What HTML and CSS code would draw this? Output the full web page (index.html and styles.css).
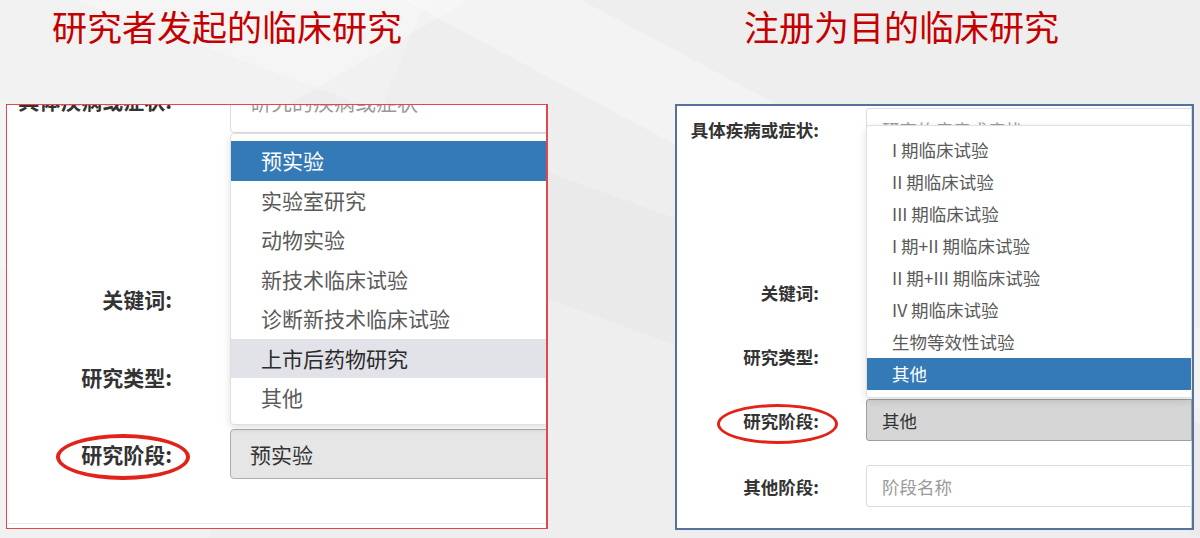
FILE: index.html
```html
<!DOCTYPE html>
<html lang="zh-CN">
<head>
    <meta charset="UTF-8">
    <title>研究阶段对比</title>
    <link rel="stylesheet" href="styles.css">
</head>
<body>
    <div class="slide">
        <section class="case">
            <h1 class="case-title title-iit">研究者发起的临床研究</h1>
            <div class="panel panel-iit">
                <div class="sheet">
                    <div class="form-group disease">
                        <label>具体疾病或症状:</label>
                        <div class="field area placeholder">研究的疾病或症状</div>
                    </div>
                    <div class="form-group keyword">
                        <label>关键词:</label>
                        <div class="field"></div>
                    </div>
                    <div class="form-group type">
                        <label>研究类型:</label>
                        <div class="field"></div>
                    </div>
                    <div class="form-group stage">
                        <label>研究阶段:</label>
                        <div class="field select">预实验</div>
                    </div>
                </div>

                <ul class="menu">
                    <li class="active">预实验</li>
                    <li>实验室研究</li>
                    <li>动物实验</li>
                    <li>新技术临床试验</li>
                    <li>诊断新技术临床试验</li>
                    <li class="hover">上市后药物研究</li>
                    <li>其他</li>
                </ul>
                <span class="mark"></span>
            </div>
        </section>

        <section class="case">
            <h1 class="case-title title-reg">注册为目的临床研究</h1>
            <div class="panel panel-reg">
                <div class="sheet">
                    <div class="form-group disease">
                        <label>具体疾病或症状:</label>
                        <div class="field placeholder">研究的疾病或症状</div>
                    </div>
                    <div class="form-group keyword">
                        <label>关键词:</label>
                        <div class="field"></div>
                    </div>
                    <div class="form-group type">
                        <label>研究类型:</label>
                        <div class="field"></div>
                    </div>
                    <div class="form-group stage">
                        <label>研究阶段:</label>
                        <div class="field select">其他</div>
                    </div>
                    <div class="form-group other">
                        <label>其他阶段:</label>
                        <div class="field placeholder">阶段名称</div>
                    </div>
                </div>

                <ul class="menu">
                    <li>I 期临床试验</li>
                    <li>II 期临床试验</li>
                    <li>III 期临床试验</li>
                    <li>I 期+II 期临床试验</li>
                    <li>II 期+III 期临床试验</li>
                    <li>IV 期临床试验</li>
                    <li>生物等效性试验</li>
                    <li class="active">其他</li>
                </ul>
                <span class="mark"></span>
            </div>
        </section>
    </div>
</body>
</html>
```

FILE: styles.css
```css
body {
    margin: 0;
    width: 1200px;
    height: 538px;
    overflow: hidden;
    font-family: "Noto Sans CJK SC", "Noto Sans", sans-serif;
    color: #333;
    background-color: #eeeeee;
    background-image:
        linear-gradient(150deg, rgba(255, 255, 255, 0.25) 0 22%, transparent 22%),
        linear-gradient(28deg, transparent 64%, rgba(255, 255, 255, 0.3) 64% 72%, transparent 72%),
        linear-gradient(200deg, transparent 42%, rgba(0, 0, 0, 0.015) 42% 55%, transparent 55%),
        linear-gradient(112deg, rgba(255, 255, 255, 0.2) 0 30%, transparent 30%);
}

.slide {
    display: grid;
    grid-template-columns: 542px 519px;
    column-gap: 127px;
    padding-left: 6px;
}

.case {
    display: flex;
    flex-direction: column;
}

.case-title {
    margin: 0;
    height: 104px;
    font-size: 35px;
    line-height: 52px;
    font-weight: normal;
    color: #c40000;
    white-space: nowrap;
}

.title-iit {
    padding-left: 46px;
}

.title-reg {
    padding-left: 69px;
}

/* screenshot frames */
.panel {
    position: relative;
    box-sizing: border-box;
    background-color: #fff;
    overflow: hidden;
}

.panel-iit {
    width: 542px;
    height: 425px;
    border: 1px solid #e2474c;
    border-right-width: 2px;
}

.panel-reg {
    width: 519px;
    height: 426px;
    border: 2px solid #56729b;
    box-shadow: inset -1px 0 0 #cfd5de;
}

.sheet {
    display: flow-root;
}

.form-group {
    display: flex;
    align-items: center;
}

.form-group label {
    flex: none;
    text-align: right;
    font-weight: bold;
    color: #333;
    white-space: nowrap;
}

.field {
    box-sizing: border-box;
    height: 100%;
    border: 1px solid #dcdcdc;
    background-color: #fff;
    white-space: nowrap;
    display: flex;
    align-items: center;
}

.placeholder {
    color: #9a9a9a;
}

.menu {
    position: absolute;
    margin: 0;
    list-style: none;
    background-color: #fff;
    border: 1px solid #e0e0e0;
    border-radius: 4px;
    box-shadow: 0 3px 8px rgba(0, 0, 0, 0.12);
    color: #5a5a5a;
}

.menu li {
    white-space: nowrap;
}

.menu li.active {
    background-color: #337ab7;
    color: #fff;
}

.menu li.hover {
    background-color: #e2e3e8;
    color: #2b2b2b;
}

.mark {
    position: absolute;
    box-sizing: border-box;
    border: 4px solid #e2231a;
    border-radius: 50%;
}

/* left: investigator initiated */
.panel-iit .sheet {
    height: 418px;
    border-bottom: 1px solid #ebebeb;
}

.panel-iit .form-group {
    height: 50px;
}

.panel-iit .form-group label {
    width: 165px;
    margin-right: 58px;
    font-size: 21px;
}

.panel-iit .field {
    flex: none;
    width: 340px;
    padding: 0 19px;
    font-size: 21px;
    border-radius: 4px;
}

.panel-iit .disease {
    margin-top: -25px;
    height: 53px;
    align-items: flex-start;
}

.panel-iit .disease label {
    line-height: 40px;
}

.panel-iit .field.area {
    align-items: flex-start;
    line-height: 40px;
    border-radius: 0 0 4px 4px;
}

.panel-iit .keyword {
    margin-top: 141px;
}

.panel-iit .type {
    margin-top: 28px;
}

.panel-iit .stage {
    margin-top: 27px;
}

.panel-iit .select {
    background-color: #e6e6e6;
    border-color: #adadad;
    color: #333;
}

.panel-iit .menu {
    top: 28px;
    left: 223px;
    width: 340px;
    padding: 7px 0 6px;
    font-size: 21px;
}

.panel-iit .menu li {
    height: 39.5px;
    line-height: 39.5px;
    padding-left: 30px;
}

.panel-iit .mark {
    left: 49px;
    top: 329px;
    width: 134px;
    height: 46px;
}

/* right: registration purpose */
.panel-reg .form-group {
    height: 42px;
}

.panel-reg .form-group label {
    width: 142px;
    margin-right: 47px;
    font-size: 17.5px;
}

.panel-reg .field {
    flex: 1;
    padding: 0 15px;
    font-size: 17.5px;
    border-radius: 3px 0 0 3px;
}

.panel-reg .disease {
    margin-top: 2px;
}

.panel-reg .keyword {
    margin-top: 121px;
}

.panel-reg .type,
.panel-reg .stage,
.panel-reg .other {
    margin-top: 22px;
}

.panel-reg .other {
    margin-top: 24px;
}

.panel-reg .select {
    background-color: #d6d6d6;
    border-color: #9e9e9e;
    color: #333;
}

.panel-reg .menu {
    top: 19px;
    left: 189px;
    right: 0;
    padding: 8px 0 7px;
    font-size: 17.5px;
    border-radius: 3px 0 0 3px;
}

.panel-reg .menu li {
    height: 32px;
    line-height: 32px;
    padding-left: 25px;
}

.panel-reg .mark {
    left: 40px;
    top: 298px;
    width: 121px;
    height: 40px;
    border-width: 3px;
}
```
